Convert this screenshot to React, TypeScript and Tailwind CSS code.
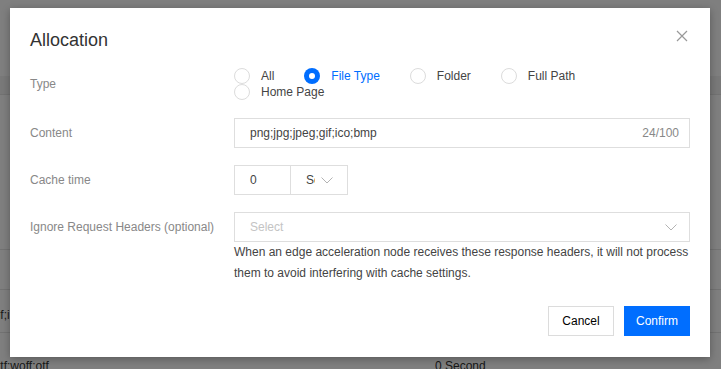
import React from 'react';

const radioOptions = [
  { label: 'All', checked: false },
  { label: 'File Type', checked: true },
  { label: 'Folder', checked: false },
  { label: 'Full Path', checked: false },
  { label: 'Home Page', checked: false },
];

function Chevron({ className }: { className?: string }) {
  return (
    <svg className={className} width="12" height="7" viewBox="0 0 12 7" fill="none">
      <path d="M0.5 0.5 L6 6 L11.5 0.5" stroke="#b3b3b3" strokeWidth="1" />
    </svg>
  );
}

function Radio({ label, checked }: { label: string; checked: boolean }) {
  return (
    <label className="flex items-center h-4 mr-[30px]">
      {checked ? (
        <span className="w-4 h-4 rounded-full bg-[#006eff] flex items-center justify-center">
          <span className="w-[6px] h-[6px] rounded-full bg-white" />
        </span>
      ) : (
        <span className="w-4 h-4 rounded-full border border-[#dcdcdc] bg-white" />
      )}
      <span className={`ml-[11px] text-[12px] ${checked ? 'text-[#006eff]' : 'text-[#444]'}`}>{label}</span>
    </label>
  );
}

function FormRow({ label, children }: { label: string; children: React.ReactNode }) {
  return (
    <div className="flex items-start">
      <div className="w-[204px] shrink-0 text-[12px] text-[#888] leading-[30px]">{label}</div>
      <div className="flex-1">{children}</div>
    </div>
  );
}

function BackgroundPage() {
  return (
    <div className="h-[369px] bg-white overflow-hidden text-[12px] text-[#333]">
      <div className="h-[76px]" />
      <div className="h-[19px] bg-[#f2f2f2] border-b border-[#e5e5e5]" />
      <div className="h-[155px] border-b border-[#e5e5e5]" />
      <div className="h-[40px] border-b border-[#e5e5e5]" />
      <div className="h-[43px] border-b border-[#e5e5e5] flex items-end pb-[8px] -ml-[9px]">
        <span>gif;i</span>
      </div>
      <div className="h-[40px] flex items-end -ml-[3px] leading-[14px]">
        <span className="w-[438px]">ttf;woff;otf</span>
        <span>0 Second</span>
      </div>
    </div>
  );
}

export default function App() {
  return (
    <div className="relative w-[721px] h-[369px] overflow-hidden" style={{ fontFamily: '"Liberation Sans", Arial, sans-serif' }}>
      <BackgroundPage />
      <div className="absolute inset-0 bg-black/50 pt-[8px] pl-[10px]">
        <div className="w-[700px] h-[349px] bg-white shadow-[0_2px_8px_rgba(0,0,0,0.3)] px-[20px] pt-[20px] relative">
          <div className="flex items-center justify-between h-[24px]">
            <h2 className="text-[18px] leading-[24px] text-[#333]">Allocation</h2>
            <button className="mr-[2px] -mt-[8px]">
              <svg width="12" height="12" viewBox="0 0 12 12">
                <path d="M1 1 L11 11 M11 1 L1 11" stroke="#999" strokeWidth="1.2" />
              </svg>
            </button>
          </div>

          <div className="mt-[16px] flex items-center">
            <div className="w-[204px] shrink-0 text-[12px] text-[#888]">Type</div>
            <div className="flex-1 flex flex-wrap">
              {radioOptions.map((o) => (
                <Radio key={o.label} label={o.label} checked={o.checked} />
              ))}
            </div>
          </div>

          <div className="mt-[18px]">
            <FormRow label="Content">
              <div className="h-[30px] border border-[#dedede] flex items-center justify-between pl-[15px] pr-[10px] text-[12px]">
                <span className="text-[#444]">png;jpg;jpeg;gif;ico;bmp</span>
                <span className="text-[#888]">24/100</span>
              </div>
            </FormRow>
          </div>

          <div className="mt-[17px]">
            <FormRow label="Cache time">
              <div className="flex h-[30px] text-[12px]">
                <div className="w-[57px] border border-[#dedede] flex items-center pl-[15px] text-[#444]">0</div>
                <div className="w-[58px] -ml-px border border-[#dedede] flex items-center pl-[15px] text-[#444]">
                  <span className="w-[9px] overflow-hidden whitespace-nowrap">Second</span>
                  <Chevron className="ml-[6px]" />
                </div>
              </div>
            </FormRow>
          </div>

          <div className="mt-[17px]">
            <FormRow label="Ignore Request Headers (optional)">
              <div className="h-[30px] border border-[#dedede] flex items-center justify-between pl-[15px] pr-[12px] text-[12px]">
                <span className="text-[#c4c4c4]">Select</span>
                <Chevron />
              </div>
              <p className="text-[12px] leading-[21px] text-[#444]">
                When an edge acceleration node receives these response headers, it will not process them to avoid interfering with cache settings.
              </p>
            </FormRow>
          </div>

          <div className="mt-[22px] flex justify-end gap-[10px]">
            <button className="w-[66px] h-[30px] border border-[#dcdcdc] bg-white text-[12px] text-[#000]">Cancel</button>
            <button className="w-[66px] h-[30px] bg-[#006eff] text-[12px] text-white">Confirm</button>
          </div>
        </div>
      </div>
    </div>
  );
}
